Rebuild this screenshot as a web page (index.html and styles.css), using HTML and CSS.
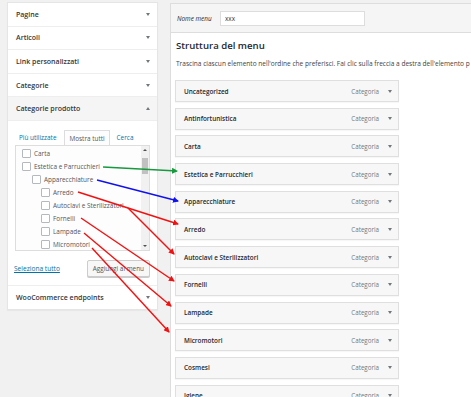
FILE: index.html
```html
<!doctype html>
<html lang="it">
  <head>
    <meta charset="utf-8">
    <title>Menu</title>
    <link rel="stylesheet" href="styles.css">
  </head>
  <body>
    <div class="screen">
      <aside class="sidebar">
        <div class="section"><h3 class="section-title">Pagine <span class="caret"></span></h3></div>
        <div class="section"><h3 class="section-title">Articoli <span class="caret"></span></h3></div>
        <div class="section"><h3 class="section-title">Link personalizzati <span class="caret"></span></h3></div>
        <div class="section"><h3 class="section-title">Categorie <span class="caret"></span></h3></div>
        <div class="section open">
          <h3 class="section-title">Categorie prodotto <span class="caret up"></span></h3>
          <div class="section-body">
            <ul class="tabs">
              <li><a href="#">Più utilizzate</a></li>
              <li class="active">Mostra tutti</li>
              <li><a href="#">Cerca</a></li>
            </ul>
            <div class="checklist">
              <ul class="terms">
                <li><span class="box"></span>Carta</li>
                <li><span class="box"></span>Estetica e Parrucchieri</li>
                <li class="lvl1"><span class="box"></span>Apparecchiature</li>
                <li class="lvl2"><span class="box"></span>Arredo</li>
                <li class="lvl2"><span class="box"></span>Autoclavi e Sterilizzatori</li>
                <li class="lvl2"><span class="box"></span>Fornelli</li>
                <li class="lvl2"><span class="box"></span>Lampade</li>
                <li class="lvl2"><span class="box"></span>Micromotori</li>
                <li class="lvl1"><span class="box"></span></li>
              </ul>
              <div class="scrollbar">
                <span class="sb-arrow"></span>
                <span class="sb-thumb"></span>
                <span class="sb-arrow down"></span>
              </div>
            </div>
            <div class="actions">
              <a href="#" class="select-all">Seleziona tutto</a>
              <button class="button">Aggiungi al menu</button>
            </div>
          </div>
        </div>
        <div class="section"><h3 class="section-title">WooCommerce endpoints <span class="caret"></span></h3></div>
      </aside>

      <main class="editor">
        <div class="editor-header">
          <label class="name-label" for="menu-name">Nome menu</label>
          <input id="menu-name" class="name-input" value="xxx">
        </div>
        <div class="editor-body">
          <h2 class="title">Struttura del menu</h2>
          <p class="hint">Trascina ciascun elemento nell'ordine che preferisci. Fai clic sulla freccia a destra dell'elemento p</p>
          <ul class="menu-items">
            <li class="item"><span class="item-name">Uncategorized</span><span class="item-type">Categoria</span><span class="caret"></span></li>
            <li class="item"><span class="item-name">Antinfortunistica</span><span class="item-type">Categoria</span><span class="caret"></span></li>
            <li class="item"><span class="item-name">Carta</span><span class="item-type">Categoria</span><span class="caret"></span></li>
            <li class="item"><span class="item-name">Estetica e Parrucchieri</span><span class="item-type">Categoria</span><span class="caret"></span></li>
            <li class="item"><span class="item-name">Apparecchiature</span><span class="item-type">Categoria</span><span class="caret"></span></li>
            <li class="item"><span class="item-name">Arredo</span><span class="item-type">Categoria</span><span class="caret"></span></li>
            <li class="item"><span class="item-name">Autoclavi e Sterilizzatori</span><span class="item-type">Categoria</span><span class="caret"></span></li>
            <li class="item"><span class="item-name">Fornelli</span><span class="item-type">Categoria</span><span class="caret"></span></li>
            <li class="item"><span class="item-name">Lampade</span><span class="item-type">Categoria</span><span class="caret"></span></li>
            <li class="item"><span class="item-name">Micromotori</span><span class="item-type">Categoria</span><span class="caret"></span></li>
            <li class="item"><span class="item-name">Cosmesi</span><span class="item-type">Categoria</span><span class="caret"></span></li>
            <li class="item"><span class="item-name">Igiene</span><span class="item-type">Categoria</span><span class="caret"></span></li>
          </ul>
        </div>
      </main>

      <!-- annotation arrows drawn over the screenshot -->
      <svg class="arrows" width="471" height="397" viewBox="0 0 471 397">
        <defs>
          <marker id="head-green" markerWidth="6" markerHeight="6" refX="5" refY="3" orient="auto" markerUnits="userSpaceOnUse">
            <path d="M0,0 L6,3 L0,6 z" fill="#169a3c"/>
          </marker>
          <marker id="head-blue" markerWidth="6" markerHeight="6" refX="5" refY="3" orient="auto" markerUnits="userSpaceOnUse">
            <path d="M0,0 L6,3 L0,6 z" fill="#1010f0"/>
          </marker>
          <marker id="head-red" markerWidth="6" markerHeight="6" refX="5" refY="3" orient="auto" markerUnits="userSpaceOnUse">
            <path d="M0,0 L6,3 L0,6 z" fill="#f41010"/>
          </marker>
        </defs>
        <line x1="103" y1="167" x2="177" y2="171" stroke="#169a3c" stroke-width="1.4" marker-end="url(#head-green)"/>
        <line x1="97" y1="180" x2="178" y2="201" stroke="#1010f0" stroke-width="1.4" marker-end="url(#head-blue)"/>
        <line x1="78" y1="192" x2="178" y2="224" stroke="#f41010" stroke-width="1.4" marker-end="url(#head-red)"/>
        <line x1="128" y1="208" x2="174" y2="254" stroke="#f41010" stroke-width="1.4" marker-end="url(#head-red)"/>
        <line x1="81" y1="218" x2="174" y2="281" stroke="#f41010" stroke-width="1.4" marker-end="url(#head-red)"/>
        <line x1="84" y1="233" x2="171" y2="306" stroke="#f41010" stroke-width="1.4" marker-end="url(#head-red)"/>
        <line x1="92" y1="248" x2="169" y2="332" stroke="#f41010" stroke-width="1.4" marker-end="url(#head-red)"/>
      </svg>
    </div>
  </body>
</html>
```

FILE: styles.css
```css
body {
  margin: 0;
  background-color: #f1f1f1;
  font-family: "Open Sans", "Noto Sans", sans-serif;
  color: #23282d;
}

ul {
  margin: 0;
  padding: 0;
  list-style: none;
}

.screen {
  position: relative;
  display: flex;
  align-items: flex-start;
  width: 471px;
  height: 397px;
  overflow: hidden;
}

/* left accordion */
.sidebar {
  box-sizing: border-box;
  flex: 0 0 151px;
  margin: 2px 0 0 7px;
  background-color: #fff;
  border: 1px solid #e5e5e5;
  box-shadow: 0 1px 1px rgba(0, 0, 0, 0.04);
}

.section {
  border-bottom: 1px solid #eee;
}

.section:last-child {
  border-bottom: none;
}

.section-title {
  display: flex;
  align-items: center;
  justify-content: space-between;
  height: 22.6px;
  margin: 0;
  padding: 0 7px 0 8px;
  font-size: 7px;
  font-weight: 600;
  color: #32373c;
}

.open .section-title {
  background-color: #f5f5f5;
}

.caret {
  width: 0;
  height: 0;
  border-left: 2.5px solid transparent;
  border-right: 2.5px solid transparent;
  border-top: 3px solid #72777c;
}

.caret.up {
  border-top: none;
  border-bottom: 3px solid #72777c;
}

.section-body {
  padding: 8px 7px 8px 7px;
  border-top: 1px solid #eee;
}

.tabs {
  display: flex;
  align-items: flex-end;
  height: 16px;
  font-size: 6.4px;
}

.tabs li {
  padding: 0 4px;
  line-height: 14px;
}

.tabs a {
  color: #0073aa;
  text-decoration: none;
}

.tabs .active {
  position: relative;
  top: 1px;
  height: 16px;
  line-height: 15px;
  margin: 0 3px 0 4px;
  background-color: #fdfdfd;
  border: 1px solid #ddd;
  border-bottom: none;
  box-sizing: border-box;
  color: #555;
}

.checklist {
  position: relative;
  display: flex;
  height: 106px;
  box-sizing: border-box;
  background-color: #fdfdfd;
  border: 1px solid #ddd;
  overflow: hidden;
}

.terms {
  flex: 1;
  padding: 1px 0 0 6px;
  font-size: 6.4px;
  color: #555;
}

.terms li {
  display: flex;
  align-items: center;
  height: 13px;
}

.terms .lvl1 {
  padding-left: 10px;
}

.terms .lvl2 {
  padding-left: 19px;
}

.box {
  box-sizing: border-box;
  width: 9px;
  height: 9px;
  margin-right: 3px;
  background-color: #fff;
  border: 1px solid #b4b9be;
  border-radius: 1px;
}

.scrollbar {
  display: flex;
  flex-direction: column;
  align-items: center;
  width: 8px;
  background-color: #f1f1f1;
}

.sb-arrow {
  margin: 3px 0;
  border-left: 2px solid transparent;
  border-right: 2px solid transparent;
  border-bottom: 2px solid #505050;
}

.sb-arrow.down {
  margin-top: auto;
  border-bottom: none;
  border-top: 2px solid #505050;
}

.sb-thumb {
  width: 6px;
  height: 16px;
  margin-top: 4px;
  background-color: #c1c1c1;
}

.actions {
  display: flex;
  align-items: center;
  justify-content: space-between;
  margin-top: 9px;
  height: 17px;
}

.select-all {
  margin-left: -1px;
  font-size: 6.6px;
  color: #0073aa;
}

.button {
  height: 17px;
  padding: 0 5px;
  font-family: inherit;
  font-size: 6.4px;
  color: #555;
  background-color: #f7f7f7;
  border: 1px solid #ccc;
  border-radius: 2px;
  box-shadow: 0 1px 0 #ccc;
}

/* right editor */
.editor {
  flex: 1 0 auto;
  margin: 3px 0 0 12px;
  min-width: 320px;
  background-color: #fff;
  border: 1px solid #ddd;
  border-right: none;
  height: 420px;
}

.editor-header {
  display: flex;
  align-items: center;
  height: 28px;
  padding-left: 6px;
  background-color: #f5f5f5;
  border-bottom: 1px solid #ddd;
}

.name-label {
  width: 43px;
  font-size: 6.4px;
  font-style: italic;
}

.name-input {
  box-sizing: border-box;
  width: 145px;
  height: 15px;
  padding: 0 4px;
  font-family: inherit;
  font-size: 6.4px;
  color: #32373c;
  background-color: #fff;
  border: 1px solid #ddd;
  outline: none;
}

.editor-body {
  padding: 0 0 0 4px;
}

.title {
  margin: 5px 0 0 1px;
  font-size: 9.6px;
  font-weight: 600;
  line-height: 16px;
}

.hint {
  margin: 5px 0 0 1px;
  font-size: 6.55px;
  line-height: 10px;
  white-space: nowrap;
  color: #444;
}

.menu-items {
  margin-top: 11px;
  width: 224px;
}

.item {
  display: flex;
  align-items: center;
  box-sizing: border-box;
  height: 22px;
  margin-bottom: 5.7px;
  padding: 0 6px 0 8px;
  background-color: #f7f7f7;
  border: 1px solid #dfdfdf;
  box-shadow: 0 1px 1px rgba(0, 0, 0, 0.03);
}

.item-name {
  flex: 1;
  font-size: 6.4px;
  font-weight: 600;
}

.item-type {
  margin-right: 9px;
  font-size: 6.2px;
  color: #72777c;
}

/* annotation overlay */
.arrows {
  position: absolute;
  top: 0;
  left: 0;
  pointer-events: none;
}
```
